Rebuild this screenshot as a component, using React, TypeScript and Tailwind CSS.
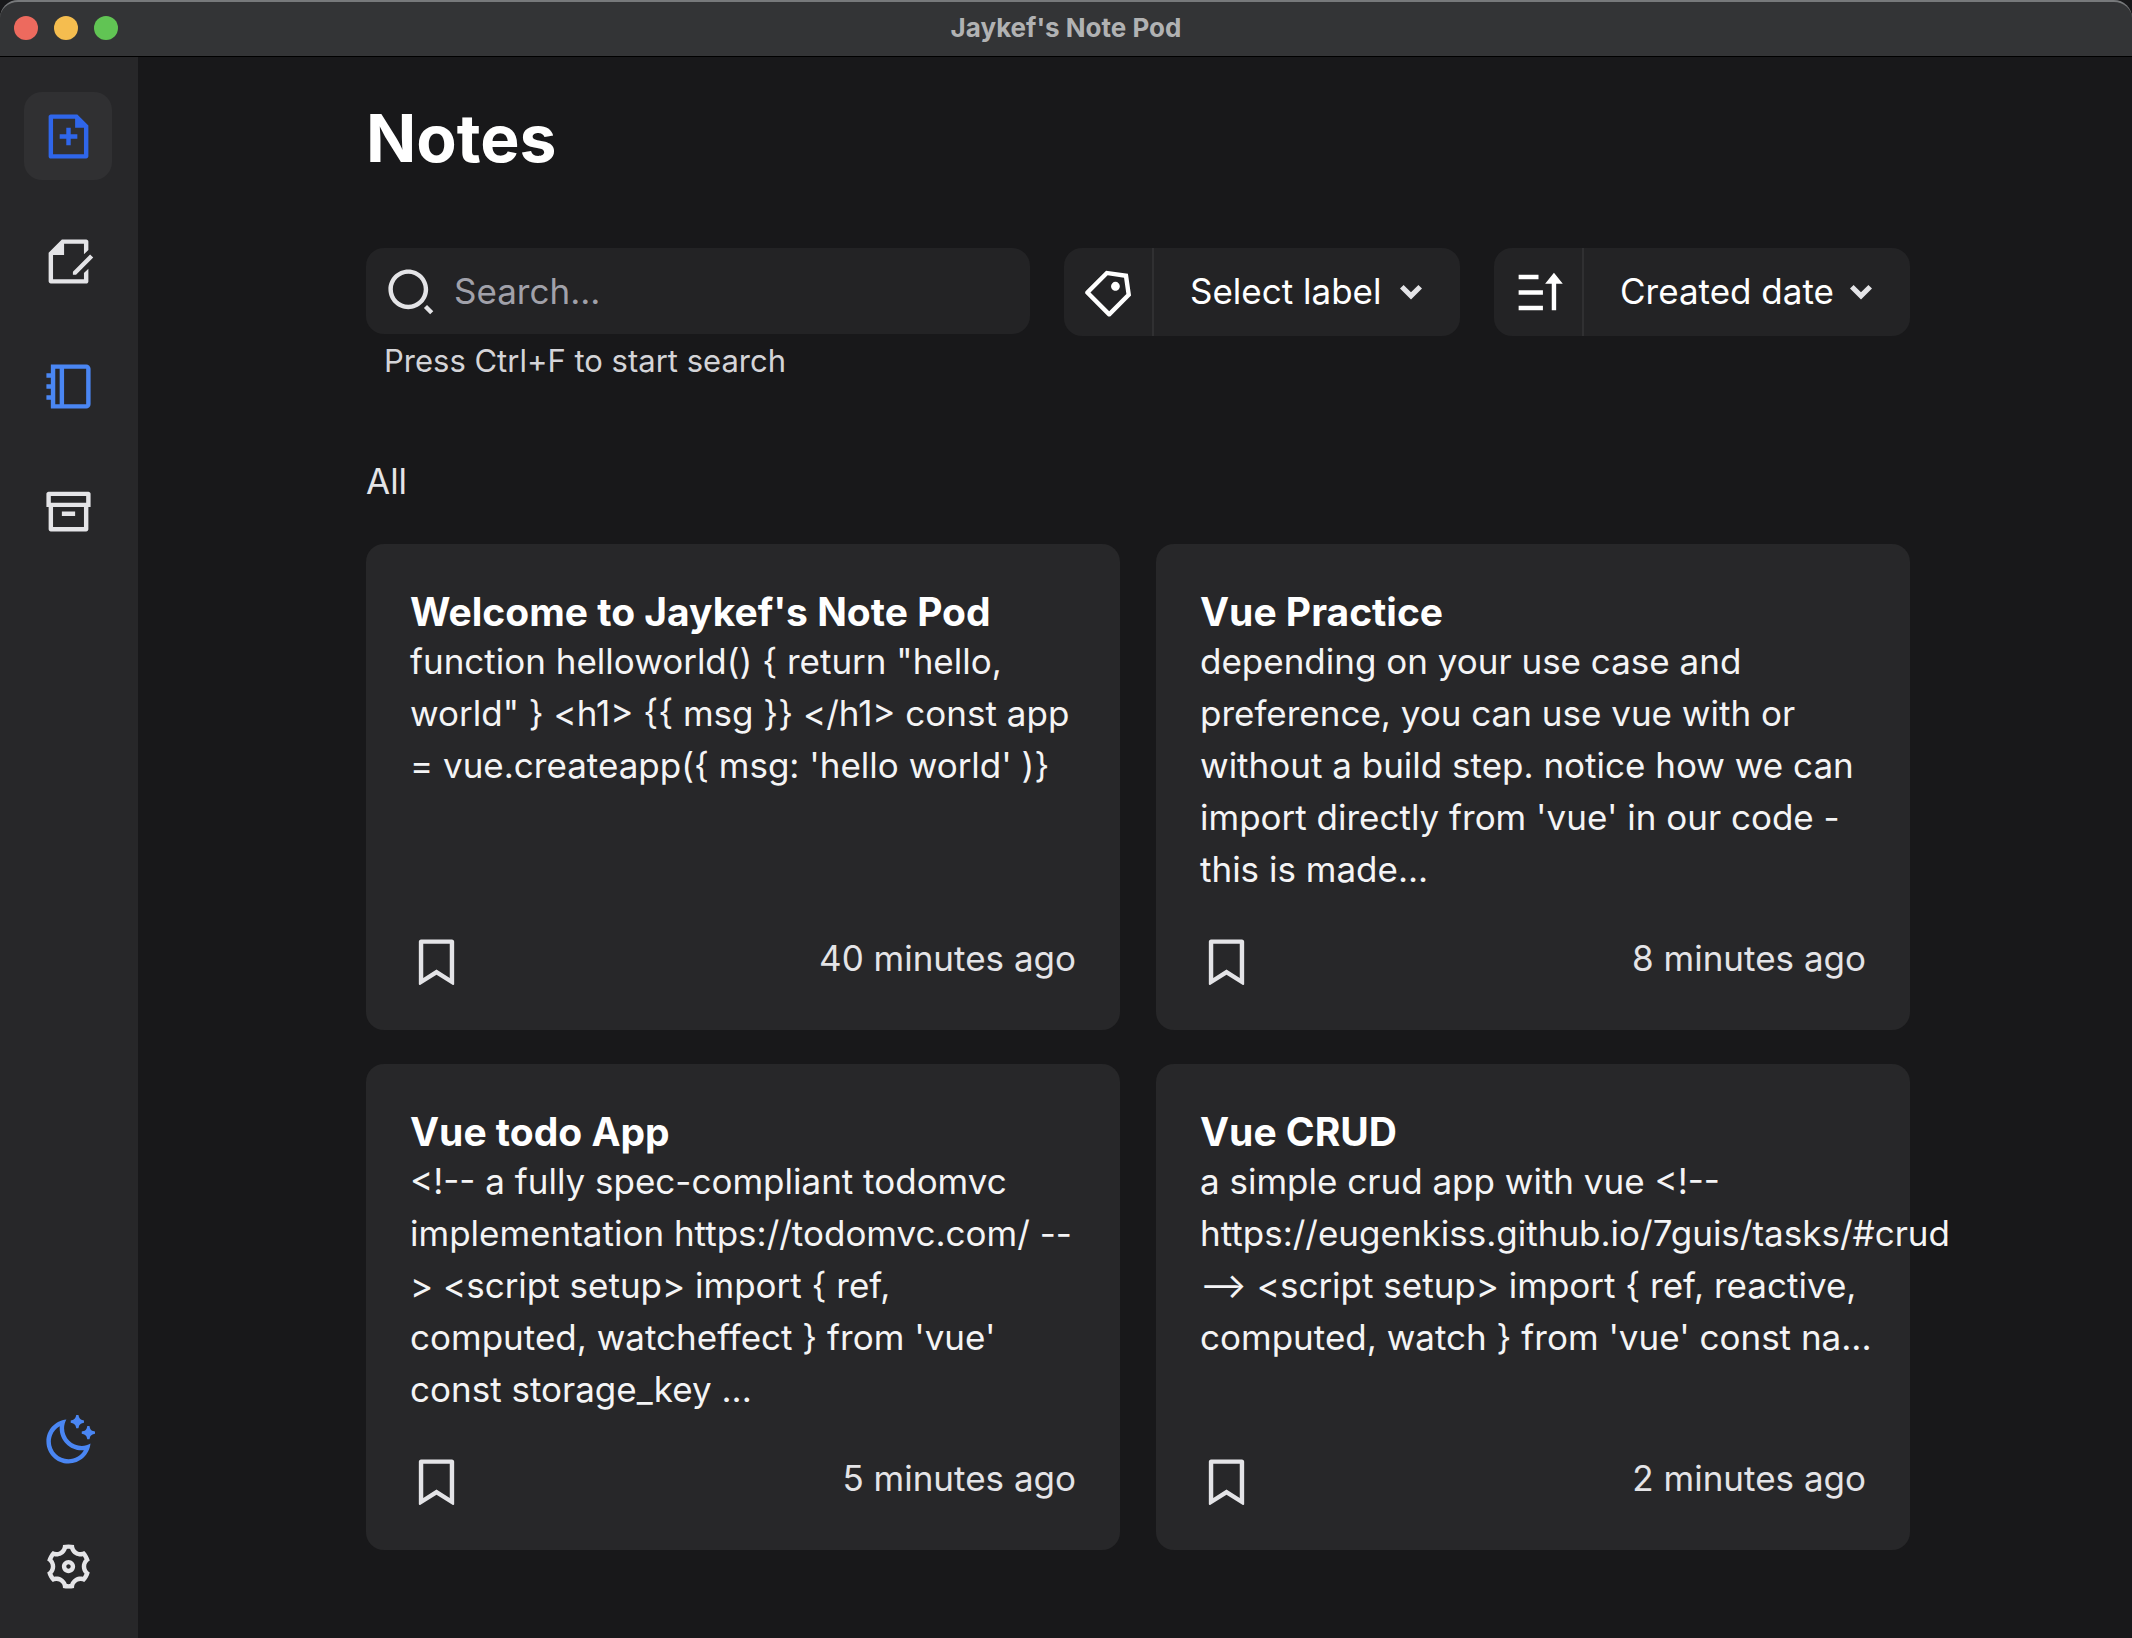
import React from "react";
import {
  RiFileAddLine,
  RiFileEditLine,
  RiBookletLine,
  RiArchiveLine,
  RiMoonClearLine,
  RiSettings4Line,
  RiSearch2Line,
  RiPriceTag3Line,
  RiSortAsc,
  RiBookmarkLine,
} from "react-icons/ri";

const notes = [
  {
    title: "Welcome to Jaykef's Note Pod",
    body: "function helloworld() { return \"hello, world\" } <h1> {{ msg }} </h1> const app = vue.createapp({ msg: 'hello world' )}",
    time: "40 minutes ago",
  },
  {
    title: "Vue Practice",
    body: "depending on your use case and preference, you can use vue with or without a build step. notice how we can import directly from 'vue' in our code - this is made...",
    time: "8 minutes ago",
  },
  {
    title: "Vue todo App",
    body: "<!-- a fully spec-compliant todomvc implementation https://todomvc.com/ --> <script setup> import { ref,\ncomputed, watcheffect } from 'vue'\nconst storage_key ...",
    time: "5 minutes ago",
  },
  {
    title: "Vue CRUD",
    body: "a simple crud app with vue <!-- https://eugenkiss.github.io/7guis/tasks/#crud --> <script setup> import { ref, reactive, computed, watch } from 'vue' const na...",
    time: "2 minutes ago",
  },
];

const iconSize = "size-[53px]";

function NavButton({ label, className = "", children }: { label: string; className?: string; children: React.ReactNode }) {
  return (
    <button aria-label={label} className={`flex size-[88px] items-center justify-center rounded-[18px] ${className}`}>
      {children}
    </button>
  );
}

function Picker({ label, icon, option, width }: { label: string; icon: React.ReactNode; option: string; width: string }) {
  return (
    <div className="flex h-[88px] overflow-hidden rounded-[18px] bg-[#232325] text-white">
      <span className="flex w-[88px] items-center justify-center">{icon}</span>
      <div className="relative border-l-2 border-[#303032]">
        <select aria-label={label} className={`h-full appearance-none bg-transparent pb-0.5 pl-9 text-[35px] outline-none ${width}`}>
          <option>{option}</option>
        </select>
        <svg viewBox="0 0 22 15" className="pointer-events-none absolute top-[37px] right-[38px] h-[15px] w-[22px]">
          <path d="M0 3.6 3.6 0 11 7.3 18.4 0 22 3.6 11 14.6Z" fill="#e4e4e7" />
        </svg>
      </div>
    </div>
  );
}

export default function App() {
  return (
    <div className="flex min-h-screen flex-col overflow-hidden bg-[#18181a] font-[Inter,sans-serif] text-[35px] text-[#e4e4e7]">
      <header className="grid h-[57px] shrink-0 grid-cols-[1fr_auto_1fr] items-center rounded-t-[18px] border-t-2 border-b border-t-[#77797b] border-b-black bg-[#333436] px-3.5 pb-0.5">
        <div className="flex gap-4">
          <button aria-label="Close" className="size-6 rounded-full bg-[#ed6a5e]" />
          <button aria-label="Minimize" className="size-6 rounded-full bg-[#f5bd4f]" />
          <button aria-label="Zoom" className="size-6 rounded-full bg-[#61c454]" />
        </div>
        <span className="text-[26px] leading-8 font-bold text-[#b1b2b3]">Jaykef's Note Pod</span>
      </header>

      <div className="flex flex-1">
        <nav className="flex w-[138px] shrink-0 flex-col items-center gap-[37px] bg-[#272729] pt-[35px] pr-0.5 pb-7">
          <NavButton label="New note" className="bg-[#303032] text-[#2f66ea]">
            <RiFileAddLine className={iconSize} />
          </NavButton>
          <NavButton label="Edit note">
            <RiFileEditLine className={iconSize} />
          </NavButton>
          <NavButton label="Notes" className="text-[#4a86f3]">
            <RiBookletLine className={iconSize} />
          </NavButton>
          <NavButton label="Archive">
            <RiArchiveLine className={iconSize} />
          </NavButton>
          <NavButton label="Toggle theme" className="mt-auto text-[#4a86f3]">
            <RiMoonClearLine className={iconSize} />
          </NavButton>
          <NavButton label="Settings">
            <RiSettings4Line className="size-[53px] rotate-90" />
          </NavButton>
        </nav>

        <main className="flex-1 pr-[222px] pb-20 pl-[228px]">
          <h1 className="pt-[43px] text-[66px] leading-[76px] font-bold text-white">Notes</h1>

          <div className="mt-[72px] flex items-start gap-[34px]">
            <div className="flex-1">
              <label className="flex h-[86px] items-center rounded-[18px] bg-[#232325] pl-[18px]">
                <RiSearch2Line className={iconSize} />
                <input
                  type="text"
                  aria-label="Search"
                  placeholder="Search..."
                  className="ml-[17px] min-w-0 flex-1 bg-transparent outline-none placeholder:text-[#a1a1aa]"
                />
              </label>
              <p className="mt-[7px] pl-[18px] text-[31px] leading-10 text-[#d4d4d8]">Press Ctrl+F to start search</p>
            </div>
            <Picker label="Label" icon={<RiPriceTag3Line className={iconSize} />} option="Select label" width="w-[306px]" />
            <Picker label="Sort by" icon={<RiSortAsc className={iconSize} />} option="Created date" width="w-[326px]" />
          </div>

          <h2 className="mt-[74px] leading-[52px]">All</h2>

          <div className="mt-[37px] grid grid-cols-2 gap-x-9 gap-y-[34px]">
            {notes.map((note) => (
              <article key={note.title} className="flex h-[486px] min-w-0 flex-col rounded-[18px] bg-[#272729] px-11 pt-11 pb-[42px]">
                <h3 className="text-[39px] leading-[47px] font-bold text-white">{note.title}</h3>
                <p className="-mr-2 flex-1 leading-[52px] whitespace-pre-line text-[#f4f4f5]">{note.body}</p>
                <div className="flex items-start justify-between">
                  <button aria-label="Bookmark">
                    <RiBookmarkLine className={iconSize} />
                  </button>
                  <time className="leading-[46px]">{note.time}</time>
                </div>
              </article>
            ))}
          </div>
        </main>
      </div>
    </div>
  );
}
